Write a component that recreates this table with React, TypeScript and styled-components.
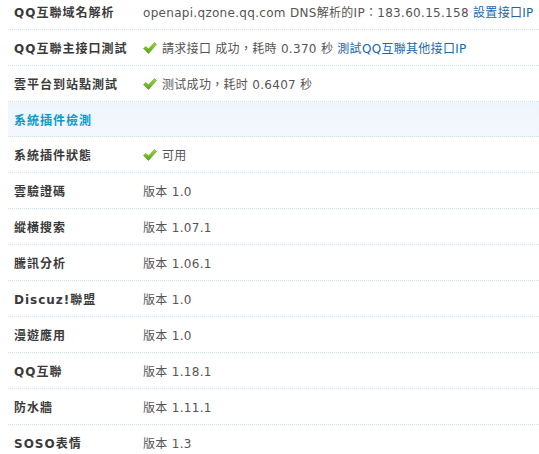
import React from "react";
import styled, { createGlobalStyle } from "styled-components";

const Global = createGlobalStyle`
  html, body { margin: 0; padding: 0; background: #fff; overflow: hidden; }
  body { font-family: "DejaVu Sans", "Noto Sans CJK TC", sans-serif; }
`;

const Table = styled.div`
  margin: -6px 0 0 8px;
  display: flex;
  flex-direction: column;
  width: 531px;
  overflow: hidden;
`;

const Row = styled.div<{ $header?: boolean }>`
  display: flex;
  align-items: center;
  box-sizing: content-box;
  height: ${(p) => (p.$header ? "34px" : "35px")};
  border-bottom: 1px dotted #cfe2f0;
  background: ${(p) => (p.$header ? "linear-gradient(#edf5fd, #f4f8fd)" : "transparent")};
`;

const Label = styled.div<{ $header?: boolean }>`
  width: 129px;
  padding-left: 6px;
  flex-shrink: 0;
  font-family: "DejaVu Sans", "Noto Sans CJK TC", sans-serif;
  font-size: 12px;
  font-weight: bold;
  letter-spacing: 1px;
  color: ${(p) => (p.$header ? "#0a9acd" : "#3a3a3a")};
  white-space: nowrap;
`;

const Value = styled.div`
  display: flex;
  align-items: center;
  gap: 5px;
  font-size: 12px;
  letter-spacing: 0.3px;
  color: #555;
  white-space: nowrap;
`;

const Link = styled.a`
  color: #2366a8;
  text-decoration: none;
`;

const Check = () => (
  <svg width="14" height="12" viewBox="0 0 14 12">
    <defs>
      <linearGradient id="g" x1="0" y1="0" x2="0" y2="1">
        <stop offset="0" stopColor="#9fdc3c" />
        <stop offset="1" stopColor="#4ea314" />
      </linearGradient>
    </defs>
    <path d="M0.5 6.5 L3 4.5 L5.5 7 L11.5 0.5 L13.5 2.5 L5.5 11.5 Z" fill="url(#g)" stroke="#5a9e1e" strokeWidth="0.6" strokeLinejoin="round" />
  </svg>
);

const plugins: [string, string][] = [
  ["雲驗證碼", "1.0"],
  ["縱橫搜索", "1.07.1"],
  ["騰訊分析", "1.06.1"],
  ["Discuz!聯盟", "1.0"],
  ["漫遊應用", "1.0"],
  ["QQ互聯", "1.18.1"],
  ["防水牆", "1.11.1"],
  ["SOSO表情", "1.3"],
];

export default function App() {
  return (
    <>
      <Global />
      <Table>
        <Row>
          <Label>QQ互聯域名解析</Label>
          <Value>
            <span>
              openapi.qzone.qq.com DNS解析的IP：183.60.15.158 <Link href="#">設置接口IP</Link>
            </span>
          </Value>
        </Row>
        <Row>
          <Label>QQ互聯主接口測試</Label>
          <Value>
            <Check />
            <span>
              請求接口 成功，耗時 0.370 秒 <Link href="#">測試QQ互聯其他接口IP</Link>
            </span>
          </Value>
        </Row>
        <Row>
          <Label>雲平台到站點測試</Label>
          <Value>
            <Check />
            <span>测试成功，耗时 0.6407 秒</span>
          </Value>
        </Row>
        <Row $header>
          <Label $header>系統插件檢測</Label>
        </Row>
        <Row>
          <Label>系統插件狀態</Label>
          <Value>
            <Check />
            <span>可用</span>
          </Value>
        </Row>
        {plugins.map(([name, ver]) => (
          <Row key={name}>
            <Label>{name}</Label>
            <Value>
              <span>版本 {ver}</span>
            </Value>
          </Row>
        ))}
      </Table>
    </>
  );
}
